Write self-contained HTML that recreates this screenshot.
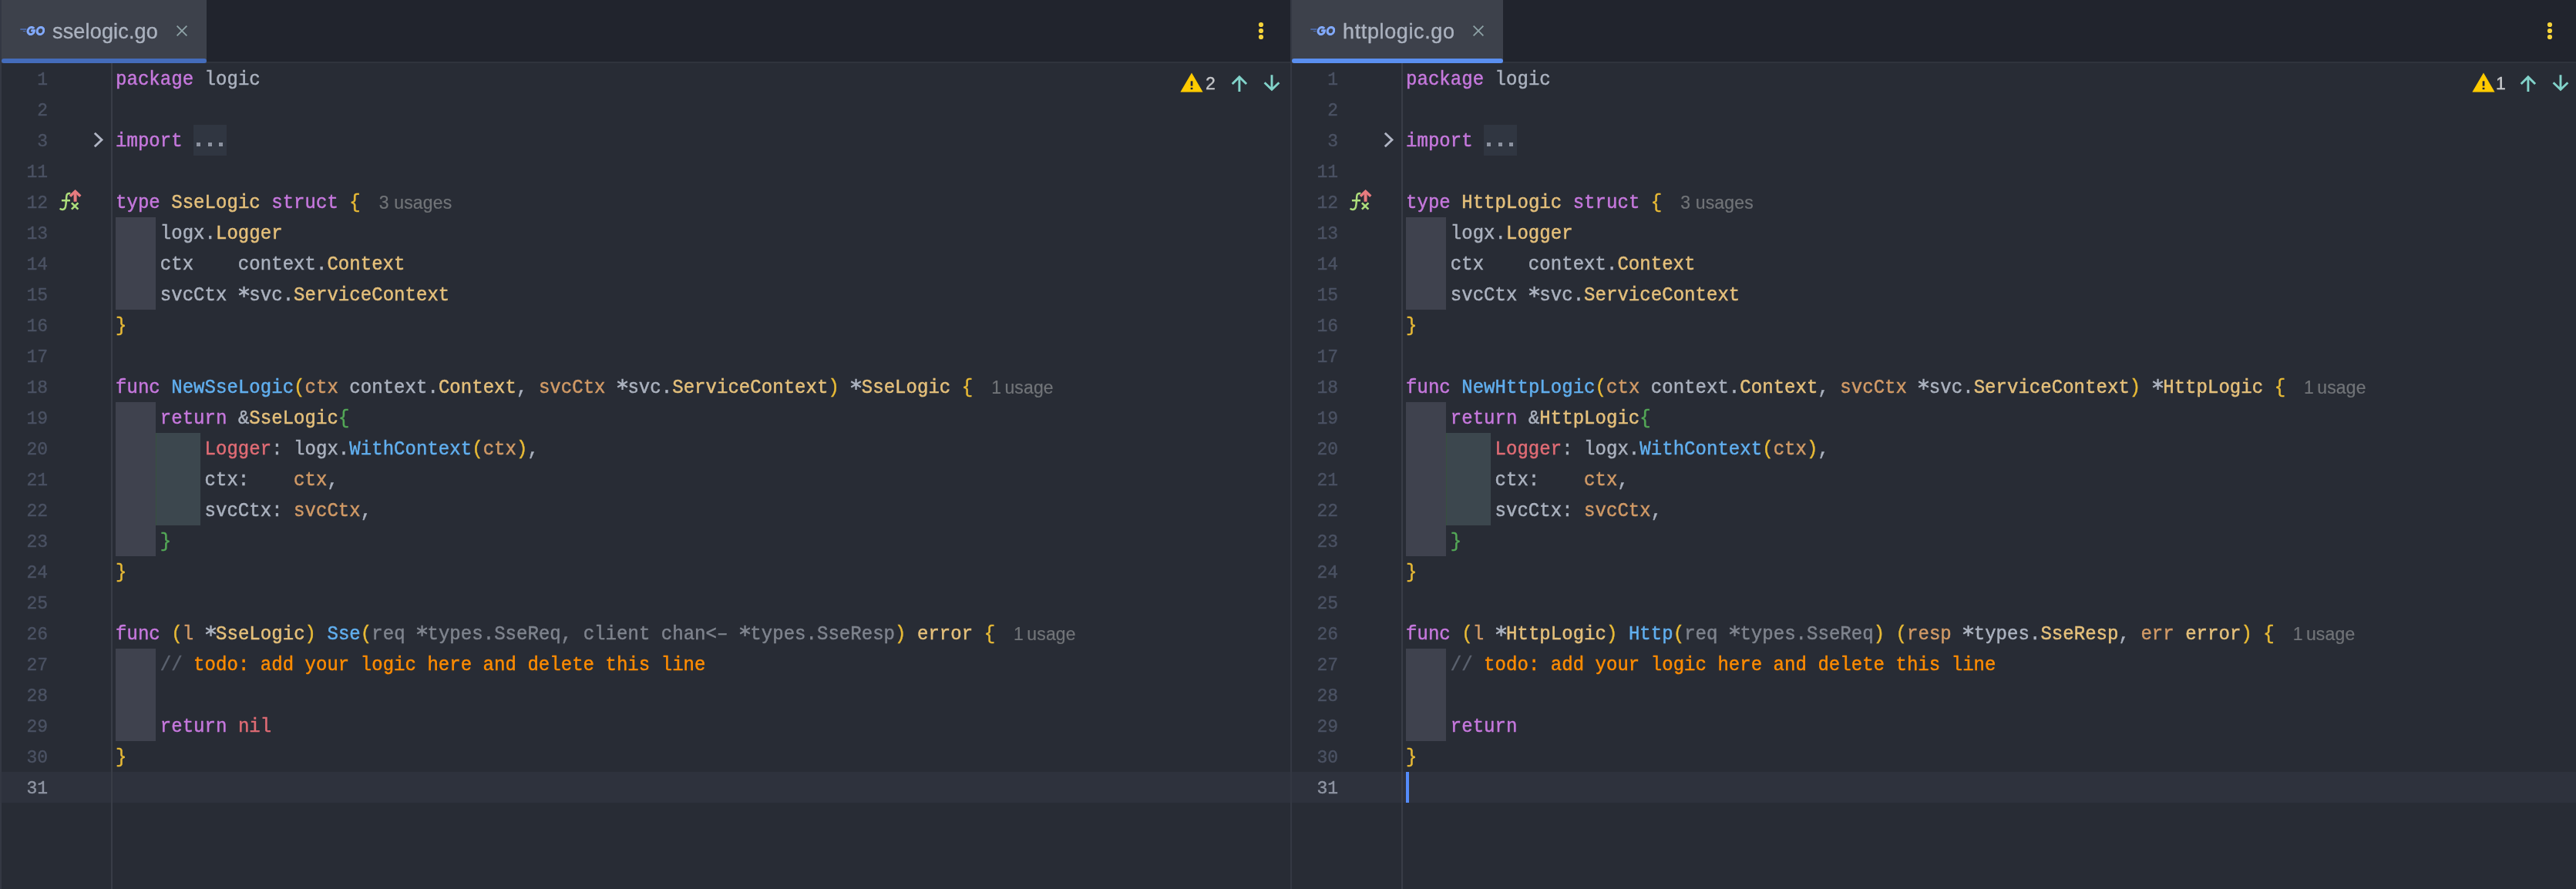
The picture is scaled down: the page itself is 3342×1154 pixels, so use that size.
<!DOCTYPE html>
<html><head><meta charset="utf-8"><title>GoLand</title>
<style>
*{margin:0;padding:0;box-sizing:border-box}
html,body{width:3342px;height:1154px;overflow:hidden;background:#282c35}
body{position:relative;font-family:"Liberation Sans",sans-serif}
.pane{position:absolute;top:0;width:1674px;height:1154px;overflow:hidden}
.pane:last-child{width:1668px}
.tabbar{position:absolute;left:0;top:0;width:100%;height:80px;background:#21242d}
.tabline{position:absolute;left:0;top:80px;width:100%;height:2px;background:#30343d}
.tab{position:absolute;left:2px;top:0;height:82px;background:#3d414b}
.goicon{position:absolute;left:24px;top:34px}
.tabname{position:absolute;left:66px;top:23px;will-change:transform;-webkit-text-stroke:0.35px;letter-spacing:0.17px;font-size:27px;line-height:36px;color:#abb2bf;white-space:pre}
.close{position:absolute;top:33px;right:25px}
.underline{position:absolute;left:0;right:0;top:76px;height:6px;border-radius:3px}
.u0{background:#446cbb}
.u1{background:#5a8ff0}
.kebab{position:absolute;left:1632px;top:28px;fill:#f7d43a}
.edge{position:absolute;left:0;top:0;width:2px;height:1154px;background:#343843}
.gline{z-index:2;position:absolute;left:144px;top:82px;width:2px;height:1072px;background:#393d47}
.curline{position:absolute;left:2px;right:0;height:40px;background:#2e323d}
.ind1{position:absolute;background:#3f424e}
.ind2{position:absolute;background:#3c474e;border-left:1.2px solid #36503f}
.ln{position:absolute;left:0;width:62px;height:40px;line-height:40px;margin-top:2px;will-change:transform;text-align:right;font-family:"Liberation Mono",monospace;font-size:23px;color:#4b5263;white-space:pre;-webkit-text-stroke:0.4px;transform:scaleY(1.06);transform-origin:0 26.2px}
.ln.cur{color:#8f95a3}
.cl{position:absolute;left:150px;height:40px;line-height:40px;margin-top:2px;will-change:transform;font-family:"Liberation Mono",monospace;font-size:24px;color:#abb2bf;white-space:pre;-webkit-text-stroke:0.45px;letter-spacing:0.04px;transform:scaleY(1.06);transform-origin:0 26.4px}
.k{color:#c678dd}.t{color:#e5c07b}.f{color:#61afef}.p{color:#d19a66}.r{color:#e06c75}
.b1{color:#e8ba36}.b2{color:#54a857}.u{color:#7f848e}.c{color:#5c6370}.todo{color:#ff8c00}
.foldbg{position:absolute;left:251px;width:43px;height:40px;background:#303641}
.foldbg i{position:absolute;top:23.2px;width:5px;height:5px;background:#8d93a0}
.hint{font-family:"Liberation Sans",sans-serif;font-size:23px;color:#717478;margin-left:24px;letter-spacing:0.15px;-webkit-text-stroke:0.2px;position:relative;top:0.7px;line-height:1;display:inline-block;transform:scaleY(0.943)}
.as{vertical-align:baseline;overflow:visible}
.hint b{font-weight:normal;margin-right:-2.3px}
.chev{position:absolute;left:120px}
.fx{position:absolute;left:72px}
.warn{position:absolute;left:1531px;top:94.3px}
.wn{will-change:transform;position:absolute;left:1564px;top:90px;font-size:23px;line-height:36px;color:#c9cacd;transform:scaleY(0.94);transform-origin:50% 26px;-webkit-text-stroke:0.4px}
.arr{position:absolute;top:97px}
.arr.up{left:1597px;top:97px}
.arr.dn{left:1639px;top:96px}
.caret{position:absolute;left:150px;width:4px;height:40px;background:#548cfb}
.divider{position:absolute;left:1674px;top:0;width:2px;height:1154px;background:#30343e}
</style></head>
<body>
<div class="pane" style="left:0px">
<div class="tabbar"></div><div class="tabline"></div>
<div class="tab" style="width:266px"><svg class="goicon" viewBox="0 0 32 12" width="32" height="12">
<g fill="#5173bd">
<rect x="0.2" y="3.3" width="8.2" height="1.5" rx="0.5"/>
<rect x="3.8" y="5.9" width="3.4" height="1.2" rx="0.5"/>
</g>
<g fill="none" stroke="#82aaff" stroke-width="3" transform="translate(0.75 0) skewX(-7)">
<path d="M17.65 3.2 A4.25 4.6 0 1 0 18.55 5.85 L14.1 5.85"/>
<ellipse cx="26.45" cy="6.05" rx="4.25" ry="4.6"/>
</g>
</svg><span class="tabname" style="letter-spacing:0.17px">sselogic.go</span><svg class="close" viewBox="0 0 14 14" width="14" height="14"><path d="M0.6 0.6 L13.4 13.4 M13.4 0.6 L0.6 13.4" stroke="#8ea2a6" stroke-width="1.8" fill="none"/></svg><div class="underline u0"></div></div>
<svg class="kebab" style="margin-left:0px" viewBox="0 0 8 24" width="8" height="24"><circle cx="4" cy="4" r="3.1"/><circle cx="4" cy="12" r="3.1"/><circle cx="4" cy="20" r="3.1"/></svg>
<div class="edge"></div><div class="gline"></div>
<div class="curline" style="top:1002px"></div>
<div class="ind1" style="left:150px;width:52px;top:282px;height:120px"></div>
<div class="ind1" style="left:150px;width:52px;top:522px;height:200px"></div>
<div class="ind2" style="left:202px;width:58px;top:562px;height:120px"></div>
<div class="ind1" style="left:150px;width:52px;top:842px;height:120px"></div>
<div class="ln" style="top:82px">1</div>
<div class="cl" style="top:82px"><span class="k">package</span> logic</div>
<div class="ln" style="top:122px">2</div>
<div class="ln" style="top:162px">3</div>
<div class="cl" style="top:162px"><span class="k">import</span></div>
<div class="ln" style="top:202px">11</div>
<div class="ln" style="top:242px">12</div>
<div class="cl" style="top:242px"><span class="k">type</span> <span class="t">SseLogic</span> <span class="k">struct</span> <span class="b1">{</span><span class="hint">3 usages</span></div>
<div class="ln" style="top:282px">13</div>
<div class="cl" style="top:282px">    logx.<span class="t">Logger</span></div>
<div class="ln" style="top:322px">14</div>
<div class="cl" style="top:322px">    ctx    context.<span class="t">Context</span></div>
<div class="ln" style="top:362px">15</div>
<div class="cl" style="top:362px">    svcCtx <svg class="as" viewBox="0 0 14.44 20" width="14.44" height="20"><path d="M7.55 2.7 V16.3 M1.2 6.1 L13.9 12.9 M13.9 6.1 L1.2 12.9" stroke="currentColor" stroke-width="2.3" fill="none"/></svg>svc.<span class="t">ServiceContext</span></div>
<div class="ln" style="top:402px">16</div>
<div class="cl" style="top:402px"><span class="b1">}</span></div>
<div class="ln" style="top:442px">17</div>
<div class="ln" style="top:482px">18</div>
<div class="cl" style="top:482px"><span class="k">func</span> <span class="f">NewSseLogic</span><span class="b1">(</span><span class="p">ctx</span> context.<span class="t">Context</span>, <span class="p">svcCtx</span> <svg class="as" viewBox="0 0 14.44 20" width="14.44" height="20"><path d="M7.55 2.7 V16.3 M1.2 6.1 L13.9 12.9 M13.9 6.1 L1.2 12.9" stroke="currentColor" stroke-width="2.3" fill="none"/></svg>svc.<span class="t">ServiceContext</span><span class="b1">)</span> <svg class="as" viewBox="0 0 14.44 20" width="14.44" height="20"><path d="M7.55 2.7 V16.3 M1.2 6.1 L13.9 12.9 M13.9 6.1 L1.2 12.9" stroke="currentColor" stroke-width="2.3" fill="none"/></svg><span class="t">SseLogic</span> <span class="b1">{</span><span class="hint"><b>1</b> usage</span></div>
<div class="ln" style="top:522px">19</div>
<div class="cl" style="top:522px">    <span class="k">return</span> &amp;<span class="t">SseLogic</span><span class="b2">{</span></div>
<div class="ln" style="top:562px">20</div>
<div class="cl" style="top:562px">        <span class="r">Logger</span>: logx.<span class="f">WithContext</span><span class="b1">(</span><span class="p">ctx</span><span class="b1">)</span>,</div>
<div class="ln" style="top:602px">21</div>
<div class="cl" style="top:602px">        ctx:    <span class="p">ctx</span>,</div>
<div class="ln" style="top:642px">22</div>
<div class="cl" style="top:642px">        svcCtx: <span class="p">svcCtx</span>,</div>
<div class="ln" style="top:682px">23</div>
<div class="cl" style="top:682px">    <span class="b2">}</span></div>
<div class="ln" style="top:722px">24</div>
<div class="cl" style="top:722px"><span class="b1">}</span></div>
<div class="ln" style="top:762px">25</div>
<div class="ln" style="top:802px">26</div>
<div class="cl" style="top:802px"><span class="k">func</span> <span class="b1">(</span><span class="p">l</span> <svg class="as" viewBox="0 0 14.44 20" width="14.44" height="20"><path d="M7.55 2.7 V16.3 M1.2 6.1 L13.9 12.9 M13.9 6.1 L1.2 12.9" stroke="currentColor" stroke-width="2.3" fill="none"/></svg><span class="t">SseLogic</span><span class="b1">)</span> <span class="f">Sse</span><span class="b1">(</span><span class="u">req <svg class="as" viewBox="0 0 14.44 20" width="14.44" height="20"><path d="M7.55 2.7 V16.3 M1.2 6.1 L13.9 12.9 M13.9 6.1 L1.2 12.9" stroke="currentColor" stroke-width="2.3" fill="none"/></svg>types.SseReq, client chan&lt;– <svg class="as" viewBox="0 0 14.44 20" width="14.44" height="20"><path d="M7.55 2.7 V16.3 M1.2 6.1 L13.9 12.9 M13.9 6.1 L1.2 12.9" stroke="currentColor" stroke-width="2.3" fill="none"/></svg>types.SseResp</span><span class="b1">)</span> <span class="t">error</span> <span class="b1">{</span><span class="hint"><b>1</b> usage</span></div>
<div class="ln" style="top:842px">27</div>
<div class="cl" style="top:842px">    <span class="c">//</span><span class="todo"> todo: add your logic here and delete this line</span></div>
<div class="ln" style="top:882px">28</div>
<div class="ln" style="top:922px">29</div>
<div class="cl" style="top:922px">    <span class="k">return</span> <span class="r">nil</span></div>
<div class="ln" style="top:962px">30</div>
<div class="cl" style="top:962px"><span class="b1">}</span></div>
<div class="ln cur" style="top:1002px">31</div>
<div class="foldbg" style="top:162px"><i style="left:4.3px"></i><i style="left:18.8px"></i><i style="left:33.2px"></i></div>
<svg class="chev" style="top:170px" viewBox="0 0 16 24" width="16" height="24"><path d="M2.8 2.7 L12 11.5 L2.8 20.2" fill="none" stroke="#b0b5c4" stroke-width="2.9"/></svg>
<svg class="fx" style="top:240px" viewBox="0 0 40 40" width="40" height="40">
<path d="M5.7 30.5 C7.6 32.7 11.6 32.9 12.9 28.6 C13.6 26 13.8 22.5 13.9 20.3 L14.3 14.6 C14.6 11.6 16.3 10.8 19.3 11.1 M7.9 20.3 L19 20.3" fill="none" stroke="#aede7c" stroke-width="2.5"/>
<path d="M20.9 23.3 L29.4 31.7 M29.4 23.3 L20.9 31.7" fill="none" stroke="#aede7c" stroke-width="2.6"/>
<path d="M18.9 14.8 L25.6 8.3 L32.3 14.8" fill="none" stroke="#e87b7f" stroke-width="3.4"/>
<path d="M25.6 10 L25.6 21.8" fill="none" stroke="#e87b7f" stroke-width="4"/>
</svg>
<svg class="warn" style="margin-left:0.0px" viewBox="0 0 30 26" width="30" height="26"><path d="M15 0.5 L29.6 25.5 L0.4 25.5 Z" fill="#ffcb00"/><rect x="13.7" y="11.3" width="2.7" height="6.3" fill="#22253a"/><rect x="13.7" y="19.7" width="2.7" height="2.4" fill="#22253a"/></svg>
<span class="wn">2</span>
<svg class="arr up" style="margin-left:0px" viewBox="0 0 22 24" width="22" height="24"><path d="M10.9 21.9 L10.9 3.4 M1.7 12 L10.9 2.85 L20.1 12" fill="none" stroke="#82d3ca" stroke-width="2.9"/></svg>
<svg class="arr dn" style="margin-left:0px" viewBox="0 0 22 24" width="22" height="24"><path d="M11 1.2 L11 19.7 M1.6 11.2 L11 20.25 L20.4 11.2" fill="none" stroke="#82d3ca" stroke-width="2.9"/></svg>
</div><div class="pane" style="left:1674px">
<div class="tabbar"></div><div class="tabline"></div>
<div class="tab" style="width:274px"><svg class="goicon" viewBox="0 0 32 12" width="32" height="12">
<g fill="#5173bd">
<rect x="0.2" y="3.3" width="8.2" height="1.5" rx="0.5"/>
<rect x="3.8" y="5.9" width="3.4" height="1.2" rx="0.5"/>
</g>
<g fill="none" stroke="#82aaff" stroke-width="3" transform="translate(0.75 0) skewX(-7)">
<path d="M17.65 3.2 A4.25 4.6 0 1 0 18.55 5.85 L14.1 5.85"/>
<ellipse cx="26.45" cy="6.05" rx="4.25" ry="4.6"/>
</g>
</svg><span class="tabname" style="letter-spacing:0.63px">httplogic.go</span><svg class="close" viewBox="0 0 14 14" width="14" height="14"><path d="M0.6 0.6 L13.4 13.4 M13.4 0.6 L0.6 13.4" stroke="#8ea2a6" stroke-width="1.8" fill="none"/></svg><div class="underline u1"></div></div>
<svg class="kebab" style="margin-left:-2px" viewBox="0 0 8 24" width="8" height="24"><circle cx="4" cy="4" r="3.1"/><circle cx="4" cy="12" r="3.1"/><circle cx="4" cy="20" r="3.1"/></svg>
<div class="edge"></div><div class="gline"></div>
<div class="curline" style="top:1002px"></div>
<div class="ind1" style="left:150px;width:52px;top:282px;height:120px"></div>
<div class="ind1" style="left:150px;width:52px;top:522px;height:200px"></div>
<div class="ind2" style="left:202px;width:58px;top:562px;height:120px"></div>
<div class="ind1" style="left:150px;width:52px;top:842px;height:120px"></div>
<div class="ln" style="top:82px">1</div>
<div class="cl" style="top:82px"><span class="k">package</span> logic</div>
<div class="ln" style="top:122px">2</div>
<div class="ln" style="top:162px">3</div>
<div class="cl" style="top:162px"><span class="k">import</span></div>
<div class="ln" style="top:202px">11</div>
<div class="ln" style="top:242px">12</div>
<div class="cl" style="top:242px"><span class="k">type</span> <span class="t">HttpLogic</span> <span class="k">struct</span> <span class="b1">{</span><span class="hint">3 usages</span></div>
<div class="ln" style="top:282px">13</div>
<div class="cl" style="top:282px">    logx.<span class="t">Logger</span></div>
<div class="ln" style="top:322px">14</div>
<div class="cl" style="top:322px">    ctx    context.<span class="t">Context</span></div>
<div class="ln" style="top:362px">15</div>
<div class="cl" style="top:362px">    svcCtx <svg class="as" viewBox="0 0 14.44 20" width="14.44" height="20"><path d="M7.55 2.7 V16.3 M1.2 6.1 L13.9 12.9 M13.9 6.1 L1.2 12.9" stroke="currentColor" stroke-width="2.3" fill="none"/></svg>svc.<span class="t">ServiceContext</span></div>
<div class="ln" style="top:402px">16</div>
<div class="cl" style="top:402px"><span class="b1">}</span></div>
<div class="ln" style="top:442px">17</div>
<div class="ln" style="top:482px">18</div>
<div class="cl" style="top:482px"><span class="k">func</span> <span class="f">NewHttpLogic</span><span class="b1">(</span><span class="p">ctx</span> context.<span class="t">Context</span>, <span class="p">svcCtx</span> <svg class="as" viewBox="0 0 14.44 20" width="14.44" height="20"><path d="M7.55 2.7 V16.3 M1.2 6.1 L13.9 12.9 M13.9 6.1 L1.2 12.9" stroke="currentColor" stroke-width="2.3" fill="none"/></svg>svc.<span class="t">ServiceContext</span><span class="b1">)</span> <svg class="as" viewBox="0 0 14.44 20" width="14.44" height="20"><path d="M7.55 2.7 V16.3 M1.2 6.1 L13.9 12.9 M13.9 6.1 L1.2 12.9" stroke="currentColor" stroke-width="2.3" fill="none"/></svg><span class="t">HttpLogic</span> <span class="b1">{</span><span class="hint"><b>1</b> usage</span></div>
<div class="ln" style="top:522px">19</div>
<div class="cl" style="top:522px">    <span class="k">return</span> &amp;<span class="t">HttpLogic</span><span class="b2">{</span></div>
<div class="ln" style="top:562px">20</div>
<div class="cl" style="top:562px">        <span class="r">Logger</span>: logx.<span class="f">WithContext</span><span class="b1">(</span><span class="p">ctx</span><span class="b1">)</span>,</div>
<div class="ln" style="top:602px">21</div>
<div class="cl" style="top:602px">        ctx:    <span class="p">ctx</span>,</div>
<div class="ln" style="top:642px">22</div>
<div class="cl" style="top:642px">        svcCtx: <span class="p">svcCtx</span>,</div>
<div class="ln" style="top:682px">23</div>
<div class="cl" style="top:682px">    <span class="b2">}</span></div>
<div class="ln" style="top:722px">24</div>
<div class="cl" style="top:722px"><span class="b1">}</span></div>
<div class="ln" style="top:762px">25</div>
<div class="ln" style="top:802px">26</div>
<div class="cl" style="top:802px"><span class="k">func</span> <span class="b1">(</span><span class="p">l</span> <svg class="as" viewBox="0 0 14.44 20" width="14.44" height="20"><path d="M7.55 2.7 V16.3 M1.2 6.1 L13.9 12.9 M13.9 6.1 L1.2 12.9" stroke="currentColor" stroke-width="2.3" fill="none"/></svg><span class="t">HttpLogic</span><span class="b1">)</span> <span class="f">Http</span><span class="b1">(</span><span class="u">req <svg class="as" viewBox="0 0 14.44 20" width="14.44" height="20"><path d="M7.55 2.7 V16.3 M1.2 6.1 L13.9 12.9 M13.9 6.1 L1.2 12.9" stroke="currentColor" stroke-width="2.3" fill="none"/></svg>types.SseReq</span><span class="b1">)</span> <span class="b1">(</span><span class="p">resp</span> <svg class="as" viewBox="0 0 14.44 20" width="14.44" height="20"><path d="M7.55 2.7 V16.3 M1.2 6.1 L13.9 12.9 M13.9 6.1 L1.2 12.9" stroke="currentColor" stroke-width="2.3" fill="none"/></svg>types.<span class="t">SseResp</span>, <span class="p">err</span> <span class="t">error</span><span class="b1">)</span> <span class="b1">{</span><span class="hint"><b>1</b> usage</span></div>
<div class="ln" style="top:842px">27</div>
<div class="cl" style="top:842px">    <span class="c">//</span><span class="todo"> todo: add your logic here and delete this line</span></div>
<div class="ln" style="top:882px">28</div>
<div class="ln" style="top:922px">29</div>
<div class="cl" style="top:922px">    <span class="k">return</span></div>
<div class="ln" style="top:962px">30</div>
<div class="cl" style="top:962px"><span class="b1">}</span></div>
<div class="ln cur" style="top:1002px">31</div>
<div class="foldbg" style="top:162px"><i style="left:4.3px"></i><i style="left:18.8px"></i><i style="left:33.2px"></i></div>
<svg class="chev" style="top:170px" viewBox="0 0 16 24" width="16" height="24"><path d="M2.8 2.7 L12 11.5 L2.8 20.2" fill="none" stroke="#b0b5c4" stroke-width="2.9"/></svg>
<svg class="fx" style="top:240px" viewBox="0 0 40 40" width="40" height="40">
<path d="M5.7 30.5 C7.6 32.7 11.6 32.9 12.9 28.6 C13.6 26 13.8 22.5 13.9 20.3 L14.3 14.6 C14.6 11.6 16.3 10.8 19.3 11.1 M7.9 20.3 L19 20.3" fill="none" stroke="#aede7c" stroke-width="2.5"/>
<path d="M20.9 23.3 L29.4 31.7 M29.4 23.3 L20.9 31.7" fill="none" stroke="#aede7c" stroke-width="2.6"/>
<path d="M18.9 14.8 L25.6 8.3 L32.3 14.8" fill="none" stroke="#e87b7f" stroke-width="3.4"/>
<path d="M25.6 10 L25.6 21.8" fill="none" stroke="#e87b7f" stroke-width="4"/>
</svg>
<svg class="warn" style="margin-left:2.4px" viewBox="0 0 30 26" width="30" height="26"><path d="M15 0.5 L29.6 25.5 L0.4 25.5 Z" fill="#ffcb00"/><rect x="13.7" y="11.3" width="2.7" height="6.3" fill="#22253a"/><rect x="13.7" y="19.7" width="2.7" height="2.4" fill="#22253a"/></svg>
<span class="wn">1</span>
<svg class="arr up" style="margin-left:-2px" viewBox="0 0 22 24" width="22" height="24"><path d="M10.9 21.9 L10.9 3.4 M1.7 12 L10.9 2.85 L20.1 12" fill="none" stroke="#82d3ca" stroke-width="2.9"/></svg>
<svg class="arr dn" style="margin-left:-2px" viewBox="0 0 22 24" width="22" height="24"><path d="M11 1.2 L11 19.7 M1.6 11.2 L11 20.25 L20.4 11.2" fill="none" stroke="#82d3ca" stroke-width="2.9"/></svg>
<div class="caret" style="top:1002px"></div>
</div>
</body></html>
